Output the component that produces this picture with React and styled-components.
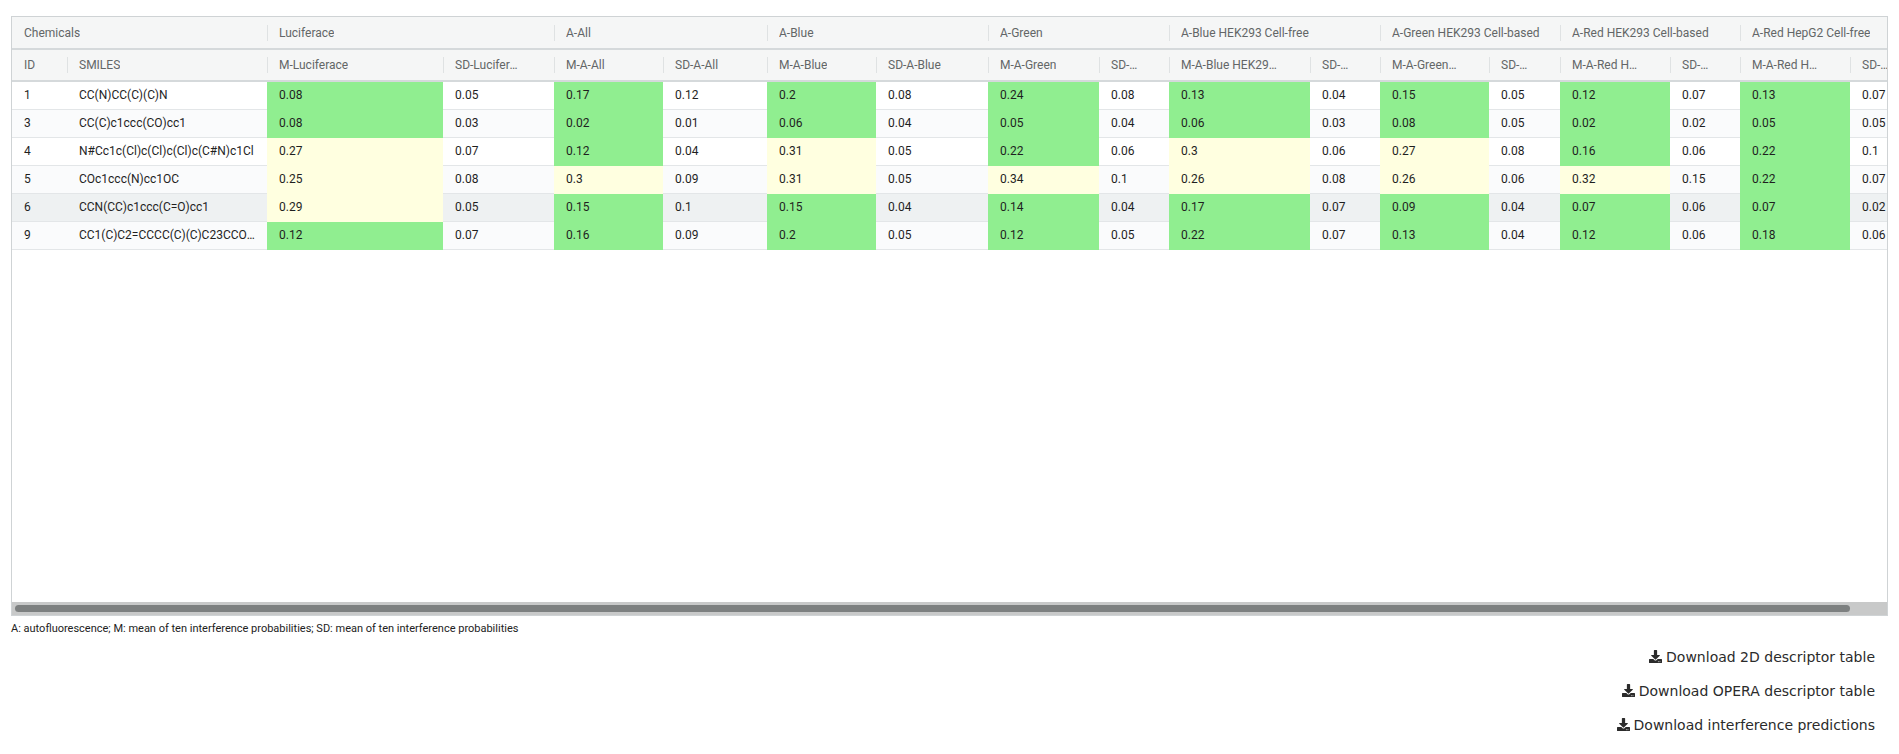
import React from "react";
import styled, { createGlobalStyle } from "styled-components";
import { FaDownload } from "react-icons/fa";

const COLS = [55, 200, 176, 111, 109, 104, 109, 112, 111, 70, 141, 70, 109, 71, 110, 70, 110, 72];
const TEMPLATE = COLS.map((w) => `${w}px`).join(" ");
const TABLE_WIDTH = COLS.reduce((a, b) => a + b, 0);
const VISIBLE_WIDTH = 1875;

const GROUPS = [
  { label: "Chemicals", span: 2 },
  { label: "Luciferace", span: 2 },
  { label: "A-All", span: 2 },
  { label: "A-Blue", span: 2 },
  { label: "A-Green", span: 2 },
  { label: "A-Blue HEK293 Cell-free", span: 2 },
  { label: "A-Green HEK293 Cell-based", span: 2 },
  { label: "A-Red HEK293 Cell-based", span: 2 },
  { label: "A-Red HepG2 Cell-free", span: 2 },
];

const HEADERS = [
  "ID",
  "SMILES",
  "M-Luciferace",
  "SD-Luciferace",
  "M-A-All",
  "SD-A-All",
  "M-A-Blue",
  "SD-A-Blue",
  "M-A-Green",
  "SD-A-Green",
  "M-A-Blue HEK293 Cell-free",
  "SD-A-Blue HEK293 Cell-free",
  "M-A-Green HEK293 Cell-based",
  "SD-A-Green HEK293 Cell-based",
  "M-A-Red HEK293 Cell-based",
  "SD-A-Red HEK293 Cell-based",
  "M-A-Red HepG2 Cell-free",
  "SD-A-Red HepG2 Cell-free",
];

const ROWS = [
  { id: 1, smiles: "CC(N)CC(C)(C)N", v: [0.08, 0.05, 0.17, 0.12, 0.2, 0.08, 0.24, 0.08, 0.13, 0.04, 0.15, 0.05, 0.12, 0.07, 0.13, 0.07] },
  { id: 3, smiles: "CC(C)c1ccc(CO)cc1", v: [0.08, 0.03, 0.02, 0.01, 0.06, 0.04, 0.05, 0.04, 0.06, 0.03, 0.08, 0.05, 0.02, 0.02, 0.05, 0.05] },
  { id: 4, smiles: "N#Cc1c(Cl)c(Cl)c(Cl)c(C#N)c1Cl", v: [0.27, 0.07, 0.12, 0.04, 0.31, 0.05, 0.22, 0.06, 0.3, 0.06, 0.27, 0.08, 0.16, 0.06, 0.22, 0.1] },
  { id: 5, smiles: "COc1ccc(N)cc1OC", v: [0.25, 0.08, 0.3, 0.09, 0.31, 0.05, 0.34, 0.1, 0.26, 0.08, 0.26, 0.06, 0.32, 0.15, 0.22, 0.07] },
  { id: 6, smiles: "CCN(CC)c1ccc(C=O)cc1", hover: true, v: [0.29, 0.05, 0.15, 0.1, 0.15, 0.04, 0.14, 0.04, 0.17, 0.07, 0.09, 0.04, 0.07, 0.06, 0.07, 0.02] },
  { id: 9, smiles: "CC1(C)C2=CCCC(C)(C)C23CCOC3C2C1", v: [0.12, 0.07, 0.16, 0.09, 0.2, 0.05, 0.12, 0.05, 0.22, 0.07, 0.13, 0.04, 0.12, 0.06, 0.18, 0.06] },
];

const GREEN = "#90ee90";
const YELLOW = "#ffffe0";
const meanColor = (x) => (x >= 0.25 ? YELLOW : GREEN);

const GlobalStyle = createGlobalStyle`
  html, body {
    margin: 0;
    padding: 0;
    background: #ffffff;
  }
  body {
    font-family: Roboto, "Liberation Sans", sans-serif;
    color: #222222;
  }
`;

const Page = styled.div`
  padding: 16px 11px 0 11px;
`;

const TableFrame = styled.div`
  box-sizing: border-box;
  height: 600px;
  border: 1px solid #cfd3d5;
  background: #ffffff;
  display: flex;
  flex-direction: column;
`;

const ScrollArea = styled.div`
  flex: 1;
  min-height: 0;
  overflow-x: auto;
  overflow-y: hidden;
  scrollbar-width: none;
  &::-webkit-scrollbar {
    display: none;
  }
`;

const ScrollTrack = styled.div`
  flex: none;
  height: 13px;
  box-sizing: border-box;
  padding: 3px;
  background: #c8c9c9;
  display: flex;
`;

const ScrollThumb = styled.div`
  height: 100%;
  border-radius: 4px;
  background: #7d8080;
`;

const Table = styled.div`
  width: ${TABLE_WIDTH}px;
  font-family: Roboto, "Liberation Sans", sans-serif;
  font-size: 12px;
`;

const HeaderRow = styled.div`
  display: grid;
  grid-template-columns: ${TEMPLATE};
  background: #f5f6f6;
  border-bottom: 2px solid #d5d9db;
  height: ${(p) => p.$height}px;
  box-sizing: content-box;
`;

const HeaderCell = styled.div`
  position: relative;
  grid-column: span ${(p) => p.$span || 1};
  display: flex;
  align-items: center;
  min-width: 0;
  padding: 0 ${(p) => p.$padRight}px 0 12px;
  color: #636667;
  white-space: nowrap;

  &::before {
    content: "";
    display: ${(p) => (p.$first ? "none" : "block")};
    position: absolute;
    left: 0;
    top: 50%;
    height: 16px;
    margin-top: -8px;
    border-left: 1px solid #dfe2e3;
  }
`;

const HeaderText = styled.span`
  overflow: hidden;
  text-overflow: ellipsis;
  white-space: nowrap;
`;

const DataRow = styled.div`
  display: grid;
  grid-template-columns: ${TEMPLATE};
  background: ${(p) => (p.$hover ? "#eef1f2" : p.$striped ? "#fafbfc" : "#ffffff")};
`;

const Cell = styled.div`
  height: 27px;
  line-height: 27px;
  padding: 0 12px;
  min-width: 0;
  overflow: hidden;
  text-overflow: ellipsis;
  white-space: nowrap;
  color: #1f1f1f;
  background: ${(p) => p.$bg || "transparent"};
  border-bottom: 1px solid ${(p) => p.$bg || "#e3e6e8"};
`;

const Footnote = styled.div`
  margin: 5px 0 4px 0;
  font-family: Roboto, "Liberation Sans", sans-serif;
  font-size: 11px;
  line-height: 15px;
  color: #222222;
`;

const Downloads = styled.div`
  display: flex;
  flex-direction: column;
  align-items: flex-end;
`;

const DownloadButton = styled.a`
  display: inline-flex;
  align-items: center;
  gap: 4px;
  padding: 6px 12px;
  border: 1px solid transparent;
  line-height: 20px;
  font-family: "DejaVu Sans", sans-serif;
  font-size: 14px;
  color: #2b2b2b;
  text-decoration: none;
  cursor: pointer;

  svg {
    width: 13px;
    height: 13px;
    margin-top: -1px;
  }
`;

export default function App() {
  const thumbShare = (VISIBLE_WIDTH / TABLE_WIDTH) * 100;
  return (
    <>
      <GlobalStyle />
      <Page>
        <TableFrame>
          <ScrollArea>
            <Table>
              <HeaderRow $height={31}>
                {GROUPS.map((g, i) => (
                  <HeaderCell key={g.label} $span={g.span} $first={i === 0} $padRight={12}>
                    <HeaderText>{g.label}</HeaderText>
                  </HeaderCell>
                ))}
              </HeaderRow>
              <HeaderRow $height={30}>
                {HEADERS.map((h, i) => (
                  <HeaderCell key={h} $first={i === 0} $padRight={i < 2 ? 12 : 30}>
                    <HeaderText>{h}</HeaderText>
                  </HeaderCell>
                ))}
              </HeaderRow>
              {ROWS.map((r, ri) => (
                <DataRow key={r.id} $striped={ri % 2 === 1} $hover={r.hover}>
                  <Cell>{r.id}</Cell>
                  <Cell>{r.smiles}</Cell>
                  {r.v.map((x, ci) => (
                    <Cell key={ci} $bg={ci % 2 === 0 ? meanColor(x) : undefined}>
                      {x}
                    </Cell>
                  ))}
                </DataRow>
              ))}
            </Table>
          </ScrollArea>
          <ScrollTrack>
            <ScrollThumb style={{ width: `${thumbShare}%` }} />
          </ScrollTrack>
        </TableFrame>
        <Footnote>
          A: autofluorescence; M: mean of ten interference probabilities; SD: mean of ten interference probabilities
        </Footnote>
        <Downloads>
          <DownloadButton>
            <FaDownload />
            Download 2D descriptor table
          </DownloadButton>
          <DownloadButton>
            <FaDownload />
            Download OPERA descriptor table
          </DownloadButton>
          <DownloadButton>
            <FaDownload />
            Download interference predictions
          </DownloadButton>
        </Downloads>
      </Page>
    </>
  );
}
